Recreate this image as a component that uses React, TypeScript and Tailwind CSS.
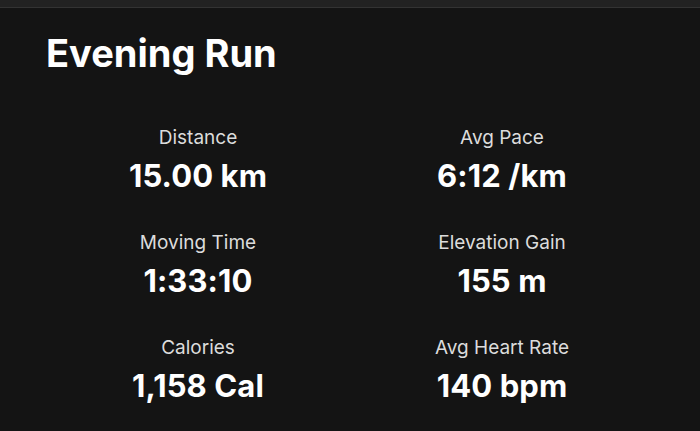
const STATS = [
	{ label: 'Distance', value: '15.00 km' },
	{ label: 'Avg Pace', value: '6:12 /km' },
	{ label: 'Moving Time', value: '1:33:10' },
	{ label: 'Elevation Gain', value: '155 m' },
	{ label: 'Calories', value: '1,158 Cal' },
	{ label: 'Avg Heart Rate', value: '140 bpm' },
]

export default function App() {
	return (
		<div className="h-[431px] w-[700px] overflow-hidden bg-[#141414] font-['Inter',sans-serif] text-white">
			<div className="h-[8px] border-b border-[#333333] bg-[#222222]" />

			<main className="px-[46px] pt-[22px]">
				<h1 className="text-[38px] leading-[46px] font-bold">Evening Run</h1>

				<div className="mt-[50px] grid grid-cols-2 gap-y-[36px]">
					{STATS.map(({ label, value }) => (
						<div key={label} className="flex flex-col items-center">
							<span className="text-[19px] leading-[24px] text-[#dcdcdc]">{label}</span>
							<span className="mt-[7px] text-[31px] leading-[38px] font-bold tracking-[0.1px]">{value}</span>
						</div>
					))}
				</div>
			</main>
		</div>
	)
}
